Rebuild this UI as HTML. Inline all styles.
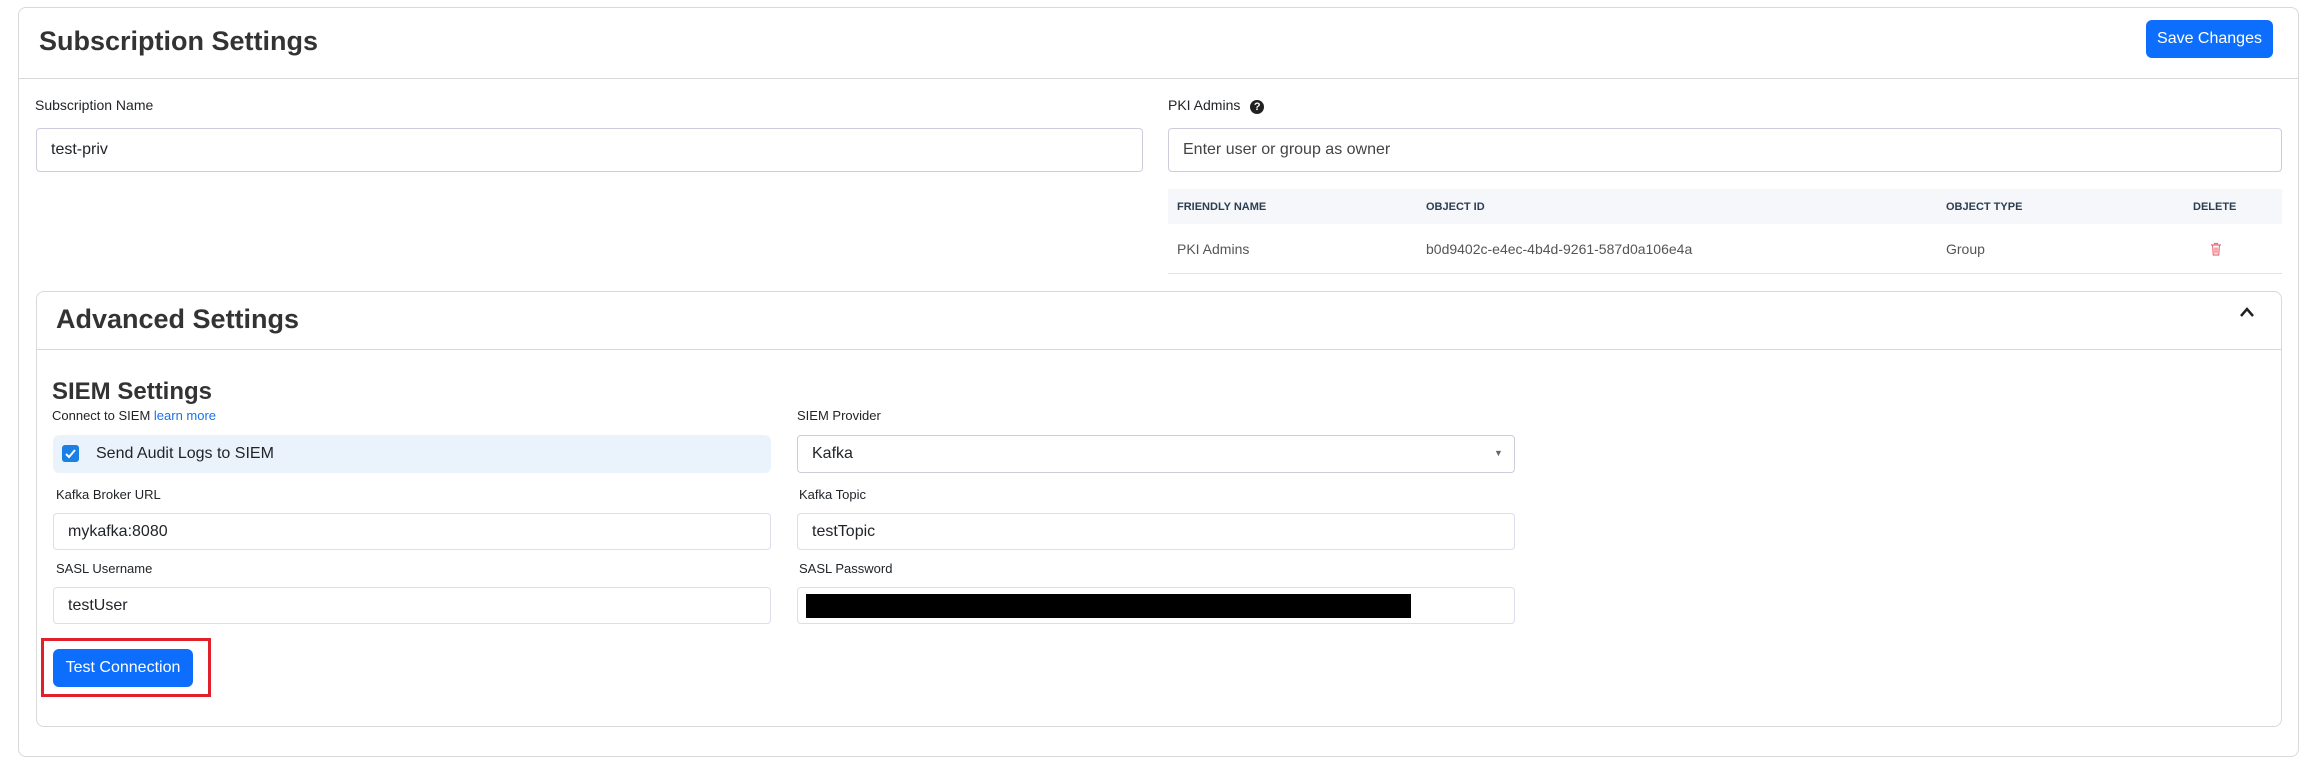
<!DOCTYPE html>
<html><head><meta charset="utf-8"><style>
*{box-sizing:border-box;margin:0;padding:0}
body{width:2304px;height:767px;background:#fff;font-family:"Liberation Sans",sans-serif;color:#212529;position:relative;overflow:hidden}
.a{position:absolute}
.card{border:1px solid #d9d9d9;border-radius:8px}
.inp{border:1px solid #ccd;border-radius:4px;font-size:16px;padding-left:14px;display:flex;align-items:center;background:#fff}
.lbl{font-size:14px;color:#212529}
.btn{background:#0d6efd;color:#fff;border-radius:6px;font-size:16px;display:flex;align-items:center;justify-content:center}
.th{font-size:11px;font-weight:bold;color:#2c3e50;top:201px}
.td{font-size:14px;color:#555;top:241px}
.ttl{font-size:27px;font-weight:bold;color:#333}
</style></head><body>
<div class="a card" style="left:18px;top:7px;width:2281px;height:750px"></div>
<div class="a" style="left:18px;top:78px;width:2281px;height:1px;background:#d9d9d9"></div>
<div class="a ttl" style="left:39px;top:26px">Subscription Settings</div>
<div class="a btn" style="left:2146px;top:20px;width:127px;height:38px">Save Changes</div>

<div class="a lbl" style="left:35px;top:97px">Subscription Name</div>
<div class="a inp" style="left:36px;top:128px;width:1107px;height:44px">test-priv</div>
<div class="a lbl" style="left:1168px;top:97px">PKI Admins <span style="display:inline-block;width:14px;height:14px;border-radius:50%;background:#222;color:#fff;font-size:11px;text-align:center;line-height:14px;font-weight:bold;margin-left:6px">?</span></div>
<div class="a inp" style="left:1168px;top:128px;width:1114px;height:44px;color:#444">Enter user or group as owner</div>
<div class="a" style="left:1168px;top:189px;width:1114px;height:35px;background:#f5f7fb"></div>
<div class="a" style="left:1168px;top:273px;width:1114px;height:1px;background:#e3e3e3"></div>
<div class="a th" style="left:1177px">FRIENDLY NAME</div>
<div class="a th" style="left:1426px">OBJECT ID</div>
<div class="a th" style="left:1946px">OBJECT TYPE</div>
<div class="a th" style="left:2193px">DELETE</div>
<div class="a td" style="left:1177px">PKI Admins</div>
<div class="a td" style="left:1426px">b0d9402c-e4ec-4b4d-9261-587d0a106e4a</div>
<div class="a td" style="left:1946px">Group</div>
<svg class="a" style="left:2210px;top:242px" width="12" height="14" viewBox="0 0 12 14"><path d="M1 3h10M4.5 3V1.5h3V3M2.5 3l.8 10h5.4l.8-10M5 5.5v6M7 5.5v6" stroke="#e8707c" stroke-width="1.2" fill="none"/></svg>

<div class="a card" style="left:36px;top:291px;width:2246px;height:436px"></div>
<div class="a" style="left:36px;top:349px;width:2246px;height:1px;background:#d9d9d9"></div>
<div class="a ttl" style="left:56px;top:304px">Advanced Settings</div>
<svg class="a" style="left:2238px;top:305px" width="18" height="14" viewBox="0 0 18 14"><path d="M3 11L9 4l6 7" stroke="#222" stroke-width="2.5" fill="none"/></svg>

<div class="a" style="left:52px;top:378px;font-size:24px;font-weight:bold;color:#333">SIEM Settings</div>
<div class="a" style="left:52px;top:408px;font-size:13px">Connect to SIEM <span style="color:#1a73e8">learn more</span></div>
<div class="a" style="left:53px;top:435px;width:718px;height:38px;background:#eaf3fc;border-radius:6px"></div>
<div class="a" style="left:62px;top:445px;width:17px;height:17px;background:#1a80e6;border-radius:3px"></div>
<svg class="a" style="left:62px;top:445px" width="17" height="17"><path d="M4 9l3 3 6-7" stroke="#fff" stroke-width="2" fill="none"/></svg>
<div class="a" style="left:96px;top:445px;font-size:16px">Send Audit Logs to SIEM</div>

<div class="a" style="left:797px;top:408px;font-size:13px">SIEM Provider</div>
<div class="a inp" style="left:797px;top:435px;width:718px;height:38px">Kafka</div>
<div class="a" style="left:1494px;top:448px;font-size:9px;color:#666">▼</div>

<div class="a" style="left:56px;top:487px;font-size:13px">Kafka Broker URL</div>
<div class="a inp" style="left:53px;top:513px;width:718px;height:37px;border-color:#dde">mykafka:8080</div>
<div class="a" style="left:799px;top:487px;font-size:13px">Kafka Topic</div>
<div class="a inp" style="left:797px;top:513px;width:718px;height:37px;border-color:#dde">testTopic</div>
<div class="a" style="left:56px;top:561px;font-size:13px">SASL Username</div>
<div class="a inp" style="left:53px;top:587px;width:718px;height:37px;border-color:#dde">testUser</div>
<div class="a" style="left:799px;top:561px;font-size:13px">SASL Password</div>
<div class="a inp" style="left:797px;top:587px;width:718px;height:37px;border-color:#dde"></div>
<div class="a" style="left:806px;top:594px;width:605px;height:24px;background:#000"></div>

<div class="a" style="left:41px;top:638px;width:170px;height:59px;border:3px solid #e0202a"></div>
<div class="a btn" style="left:53px;top:649px;width:140px;height:38px">Test Connection</div>
</body></html>
